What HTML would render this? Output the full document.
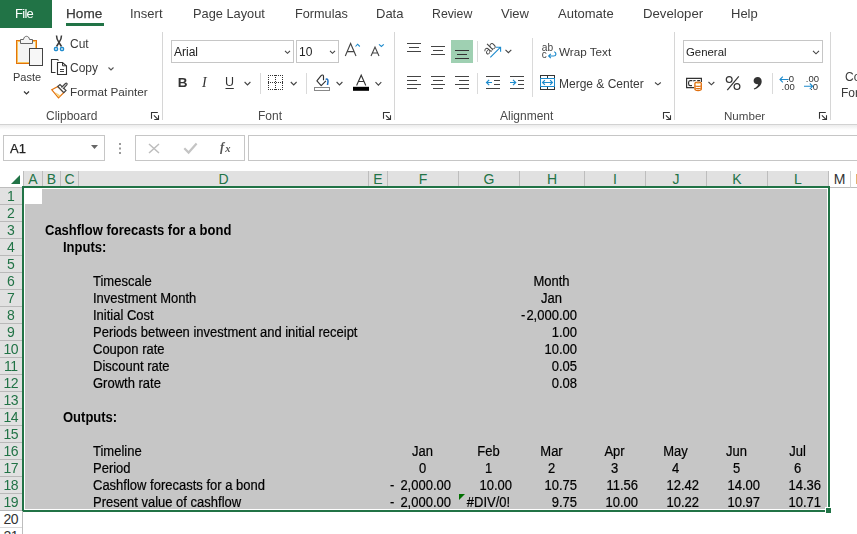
<!DOCTYPE html>
<html><head><meta charset="utf-8">
<style>
*{box-sizing:border-box;margin:0;padding:0}
html,body{width:857px;height:534px;overflow:hidden;background:#fff;font-family:"Liberation Sans",sans-serif;position:relative}
.a{position:absolute}
.t{position:absolute;white-space:pre;line-height:13px;font-size:13px}
.tab{position:absolute;white-space:pre;line-height:13px;font-size:13px;color:#3c3c3c;top:7px;will-change:transform}
.ui{position:absolute;white-space:pre;line-height:12px;font-size:12px;color:#3a3a3a;will-change:transform}
.gl{position:absolute;white-space:pre;line-height:12px;font-size:12px;color:#4a4a4a;top:110px;will-change:transform}
.sep{position:absolute;width:1px;background:#d6d6d6}
.ch{position:absolute;top:171px;height:16px;background:#e1e1e1;border-right:1px solid #bdbdbd;color:#217346;font-size:14px;line-height:16px;text-align:center}
.rh{position:absolute;left:0;width:22px;height:17px;background:#e1e1e1;border-bottom:1px solid #b9b9b9;color:#217346;font-size:14px;line-height:17px;text-align:center;letter-spacing:-0.6px;text-indent:-0.6px}
.c{position:absolute;white-space:pre;line-height:13px;font-size:13px;color:#000;transform:scaleY(1.08);transform-origin:0 11px;-webkit-text-stroke:0.2px #000}
.b{font-weight:bold}
.c.b{-webkit-text-stroke:0}
</style></head><body>

<!-- Tabs -->
<div class="a" style="left:0;top:0;width:52px;height:28px;background:#217346"></div>
<div class="tab" style="left:14.5px;color:#fff;font-size:13px;top:7px;letter-spacing:-0.7px">File</div>
<div class="tab" style="left:66px;color:#3a3a3a;font-size:13.6px;-webkit-text-stroke:0.25px #3a3a3a">Home</div>
<div class="a" style="left:66px;top:23px;width:38px;height:3px;background:#217346"></div>
<div class="tab" style="left:130px">Insert</div>
<div class="tab" style="left:193px;font-size:12.8px">Page Layout</div>
<div class="tab" style="left:294.5px;font-size:12.7px;top:8px">Formulas</div>
<div class="tab" style="left:376px">Data</div>
<div class="tab" style="left:432px;font-size:12.3px;top:8px">Review</div>
<div class="tab" style="left:500.5px">View</div>
<div class="tab" style="left:557.5px">Automate</div>
<div class="tab" style="left:643px;font-size:13.2px">Developer</div>
<div class="tab" style="left:731px">Help</div>

<!-- Ribbon bottom -->
<div class="a" style="left:0;top:124px;width:857px;height:1px;background:#d2d2d2"></div>
<div class="a" style="left:0;top:125px;width:857px;height:5px;background:linear-gradient(#ececec,#fff)"></div>

<!-- group separators -->
<div class="sep" style="left:162px;top:32px;height:88px"></div>
<div class="sep" style="left:394px;top:32px;height:88px"></div>
<div class="sep" style="left:674px;top:32px;height:88px"></div>
<div class="sep" style="left:830px;top:32px;height:88px"></div>

<!-- group labels -->
<div class="gl" style="left:46px">Clipboard</div>
<div class="gl" style="left:258px">Font</div>
<div class="gl" style="left:500px">Alignment</div>
<div class="gl" style="left:724px;font-size:11.6px">Number</div>


<!-- ribbon svg -->
<svg class="a" style="left:0;top:0" width="857" height="190" viewBox="0 0 857 190">
 <g fill="none" stroke-linecap="butt">
  <!-- paste -->
  <rect x="16.5" y="40.5" width="20" height="23" fill="#f4f4f4" stroke="#e3730d"/>
  <rect x="17.5" y="41.5" width="18" height="21" stroke="#f6c65e"/>
  <path d="M20.5 43.5V39.5H23.5C23.8 37.3 25 36.3 26.5 36.3C28 36.3 29.2 37.3 29.5 39.5H32.5V43.5Z" fill="#f4f4f4" stroke="#666"/>
  <rect x="29.5" y="48.5" width="13" height="17" fill="#f7f7f7" stroke="#444"/>
  <path d="M24 91.5l2.5 2.5l2.5-2.5" stroke="#333" stroke-width="1.2"/>
  <!-- cut -->
  <path d="M56.5 35.5C56.5 38 57 40 59 42.5L61.5 46.5M61.5 35.5C61.5 38 61 40 59 42.5L56.5 46.5" stroke="#3a3a3a" stroke-width="1.5"/>
  <rect x="54.5" y="47.5" width="3" height="3" rx="1" stroke="#1e8bcd" stroke-width="1.4"/>
  <rect x="60.5" y="47.5" width="3" height="3" rx="1" stroke="#1e8bcd" stroke-width="1.4"/>
  <!-- copy -->
  <path d="M55.5 72.5H51.5V59.5H57.5L58.5 60.5" stroke="#333" stroke-width="1.1"/>
  <path d="M57.5 62.5H62.5L66.5 66V74.5H57.5Z" fill="#fff" stroke="#333" stroke-width="1.1"/>
  <path d="M62.5 62.5V65.8H66.5" stroke="#333"/>
  <path d="M60 69.5H64M60 71.5H64" stroke="#444"/>
  <path d="M108.5 67.5l2.5 2.5l2.5-2.5" stroke="#555" stroke-width="1.1"/>
  <!-- format painter -->
  <path d="M51.8 89.8L57.8 86.5L63.8 92.6L58.5 97.8Z" fill="#fff" stroke="#e3730d" stroke-width="1.3"/>
  <path d="M55 92L60.5 95.5L58.5 97.2Z" fill="#f8d27a"/>
  <path d="M57.8 86.5L60 84.5L66 90.5L63.8 92.6Z" fill="#fff" stroke="#444" stroke-width="1.2"/>
  <path d="M61.5 87.5L65.5 83.5C66.5 82.5 67.8 83.8 66.8 84.8L63 88.8" fill="#fff" stroke="#444" stroke-width="1.2"/>
  <!-- launchers -->
  <path d="M151.5 118.8V112.5H157.8M153.9 115.4L158.2 119.7M154.3 119.5H158.5V115.2" stroke="#333" stroke-width="1.1"/>
  <path d="M383.5 118.8V112.5H389.8M385.9 115.4L390.2 119.7M386.3 119.5H390.5V115.2" stroke="#333" stroke-width="1.1"/>
  <path d="M663.5 118.8V112.5H669.8M665.9 115.4L670.2 119.7M666.3 119.5H670.5V115.2" stroke="#333" stroke-width="1.1"/>
  <path d="M819.5 118.8V112.5H825.8M821.9 115.4L826.2 119.7M822.3 119.5H826.5V115.2" stroke="#333" stroke-width="1.1"/>
  <!-- font box -->
  <rect x="171.5" y="40.5" width="122" height="22" fill="#fff" stroke="#c6c6c6"/>
  <path d="M285 50.8l2.5 2.5l2.5-2.5" stroke="#444" stroke-width="1.1"/>
  <rect x="296.5" y="40.5" width="42" height="22" fill="#fff" stroke="#c6c6c6"/>
  <path d="M330 50.8l2.5 2.5l2.5-2.5" stroke="#444" stroke-width="1.1"/>
  <!-- grow/shrink -->
  <path d="M345.3 56L350.6 43.5L356 56M347.2 51.6H354" stroke="#444" stroke-width="1.1"/>
  <path d="M355.5 46.5L357.6 44.2L359.8 46.5" stroke="#1e8bcd" stroke-width="1.1"/>
  <path d="M371 56L375 47L379 56M372.4 53H377.6" stroke="#444" stroke-width="1.1"/>
  <path d="M379 44.3L381.4 46.5L383.8 44.3" stroke="#1e8bcd" stroke-width="1.1"/>
  <!-- B I U -->
  <path d="M225.5 88.5H233.8" stroke="#333"/>
  <path d="M244.6 82l2.9 2.9l2.9-2.9" stroke="#444" stroke-width="1.1"/>
  <path d="M260.5 73V94" stroke="#dadada"/>
  <!-- borders -->
  <path d="M268 75.5H283.5M268 89.5H283.5M268.5 75V90M282.5 75V90M268 82.5H283.5M275.5 75V90" stroke="#333" stroke-dasharray="1 1"/>
  <path d="M290.8 82l2.9 2.9l2.9-2.9" stroke="#444" stroke-width="1.1"/>
  <path d="M306.5 73V94" stroke="#dadada"/>
  <!-- fill -->
  <path d="M323.5 80.3V76.3C323.5 74.9 322 74.6 321.1 75.7L316.9 80.9L321.2 85.6L325.9 80.9" stroke="#333" stroke-width="1.15" stroke-linejoin="round"/>
  <path d="M325.8 79.6C326.6 78.4 328 79 328 81.2C328 82.6 327.6 83.6 327.5 85" stroke="#1e6fc0" stroke-width="1.5"/>
  <rect x="314.5" y="87.5" width="15" height="3" stroke="#888" fill="#fff"/>
  <path d="M336.6 82l2.9 2.9l2.9-2.9" stroke="#444" stroke-width="1.1"/>
  <!-- font color -->
  <path d="M356.6 85.5L361.2 75.2L365.8 85.5M358.3 81.5H364.1" stroke="#333" stroke-width="1.1"/>
  <rect x="353" y="86.8" width="16" height="4" fill="#000"/>
  <path d="M375.5 82.2l2.9 2.9l2.9-2.9" stroke="#444" stroke-width="1.1"/>
  <!-- alignment row 1 -->
  <path d="M407 43.5H421M409 47.5H419M407 51.5H421" stroke="#444"/>
  <path d="M431 46.5H445M433 50.5H443M431 54.5H445" stroke="#444"/>
  <rect x="451" y="40" width="22" height="23" fill="#9fd0b2"/>
  <path d="M455 50.5H469M457 54.5H467M455 58.5H469" stroke="#333"/>
  <path d="M477.5 41V62" stroke="#dadada"/>
  <!-- orientation -->
  <text x="0" y="0" transform="translate(487.6 55.6) rotate(-45)" font-family="Liberation Sans" font-size="12" fill="#444">ab</text>
  <path d="M490.3 57.4L500.3 47.4M496 47.2H500.6V51.8" stroke="#1e8bcd" stroke-width="1.1"/>
  <path d="M505.5 49.8l2.9 2.9l2.9-2.9" stroke="#444" stroke-width="1.1"/>
  <path d="M532.5 38V97" stroke="#dadada"/>
  <!-- wrap text icon -->
  <text x="541.8" y="50.9" font-family="Liberation Sans" font-size="10.2" fill="#444">ab</text>
  <text x="541.8" y="58.2" font-family="Liberation Sans" font-size="10" fill="#444">c</text>
  <path d="M554.2 51.8C556.6 52.6 556.6 56 553.6 56H548.9M550.8 53.9L548.7 56L550.8 58.1" stroke="#1e8bcd" stroke-width="1.2"/>
  <!-- alignment row 2 -->
  <path d="M407 76.5H421M407 80.5H417M407 84.5H421M407 88.5H417" stroke="#444"/>
  <path d="M431 76.5H445M433 80.5H443M431 84.5H445M433 88.5H443" stroke="#444"/>
  <path d="M455 76.5H469M459 80.5H469M455 84.5H469M459 88.5H469" stroke="#444"/>
  <path d="M477.5 73V94" stroke="#dadada"/>
  <path d="M486 76.5H500M494 80.5H500M494 84.5H500M486 88.5H500" stroke="#444"/>
  <path d="M486.5 82.5H492M489.2 79.8L486.5 82.5L489.2 85.2" stroke="#1e8bcd" stroke-width="1.2"/>
  <path d="M510 76.5H524M518 80.5H524M518 84.5H524M510 88.5H524" stroke="#444"/>
  <path d="M510 82.5H515.6M513 79.8L515.7 82.5L513 85.2" stroke="#1e8bcd" stroke-width="1.2"/>
  <!-- merge icon -->
  <rect x="540.5" y="75.5" width="14" height="14" stroke="#333"/>
  <path d="M547.5 75.5V78.5M547.5 86.5V89.5" stroke="#333"/>
  <rect x="540.5" y="78.5" width="14" height="8" fill="#fff" stroke="#1e8bcd"/>
  <path d="M542.6 82.5H552.4M544.9 80.2L542.6 82.5L544.9 84.8M550.1 80.2L552.4 82.5L550.1 84.8" stroke="#1e8bcd" stroke-width="1.2"/>
  <path d="M655 82.5l2.9 2.4l2.9-2.4" stroke="#444" stroke-width="1.1"/>
  <!-- number -->
  <rect x="683.5" y="40.5" width="139" height="22" fill="#fff" stroke="#c6c6c6"/>
  <path d="M813 50.8l3 3l3-3" stroke="#444" stroke-width="1.1"/>
  <path d="M694 87.7H686.6V78.4H701.4V82" stroke="#333" stroke-width="1.2"/>
  <path d="M692.3 80.6H690.2C689 80.6 688.6 81.4 688.6 82.5V83.8C688.6 85 689 85.7 690.2 85.7H692" stroke="#333" stroke-width="1.2"/>
  <path d="M693.2 81.2C693.8 80.5 694.6 80.4 695.6 80.6M697.2 80.6H700" stroke="#333" stroke-width="1.1"/>
  <path d="M694.9 83.6C694.9 82.6 696.3 82.1 698.1 82.1C699.9 82.1 701.3 82.6 701.3 83.6V89C701.3 90 699.9 90.5 698.1 90.5C696.3 90.5 694.9 90 694.9 89Z" fill="#fff" stroke="#e0700f" stroke-width="1.3"/>
  <path d="M695 85.8C695.6 86.6 700.6 86.6 701.2 85.8M695 88C695.6 88.8 700.6 88.8 701.2 88" stroke="#e0700f" stroke-width="1.1"/>
  <path d="M696.5 83.4H699.7" stroke="#f6c86a" stroke-width="0.9"/>
  <path d="M708.5 82l2.9 2.8l2.9-2.8" stroke="#444" stroke-width="1.1"/>
  <path d="M772.5 73V94" stroke="#dadada"/>
  <path d="M780 79.5H788.6M782.8 76.7L780 79.5L782.8 82.3" stroke="#1e8bcd" stroke-width="1.1"/>
  <path d="M804 86.3H812.6M809.8 83.5L812.6 86.3L809.8 89.1" stroke="#1e8bcd" stroke-width="1.1"/>
 </g>
 <g fill="none" stroke="#333" stroke-width="1.2"><circle cx="729.2" cy="79.6" r="2.9"/><circle cx="737" cy="86.6" r="2.9"/><path d="M738.8 76.3L727.3 90.2"/></g>
 <path d="M757.8 76.9C760 76.9 761.7 78.6 761.7 81.2C761.7 85 758.5 88 754.2 89.6L753.8 88.6C756.3 87.4 757.8 85.8 758.2 84.2C755.6 84.5 753.6 83 753.6 80.7C753.6 78.6 755.5 76.9 757.8 76.9Z" fill="#333"/>
 <text x="786.2" y="81.6" font-family="Liberation Sans" font-size="9.5" fill="#333">.0</text>
 <text x="781.5" y="89.8" font-family="Liberation Sans" font-size="9.5" fill="#333">.00</text>
 <text x="805.8" y="81.8" font-family="Liberation Sans" font-size="9.5" fill="#333">.00</text>
 <text x="810.2" y="89.8" font-family="Liberation Sans" font-size="9.5" fill="#333">.0</text>
 <text x="177.8" y="87" font-family="Liberation Sans" font-weight="bold" font-size="13.5" fill="#333">B</text>
 <text x="202" y="87" font-family="Liberation Serif" font-style="italic" font-size="14" fill="#333">I</text>
 <text x="225" y="86.4" font-family="Liberation Sans" font-size="12.5" fill="#333">U</text>
 <!-- formula bar icons -->
 <path d="M149 144L159 153M159 144L149 153" stroke="#bdbdbd" stroke-width="1.5" fill="none"/>
 <path d="M184.3 148.3L188.6 152.6L196.6 143.6" stroke="#c4c4c4" stroke-width="2.2" fill="none"/>
 <text x="220" y="151.2" font-family="Liberation Serif" font-style="italic" font-weight="bold" font-size="12.5" fill="#555">f</text>
 <text x="225.3" y="152" font-family="Liberation Serif" font-style="italic" font-weight="bold" font-size="10.5" fill="#555">x</text>
 <path d="M91 145H98L94.5 149Z" fill="#666"/>
 <path d="M11 184H20V175Z" fill="#217346"/>
 <rect x="119" y="143" width="2" height="2" fill="#9a9a9a"/>
 <rect x="119" y="147.5" width="2" height="2" fill="#9a9a9a"/>
 <rect x="119" y="152" width="2" height="2" fill="#9a9a9a"/>
</svg>
<!-- ribbon text -->
<div class="ui" style="left:13px;top:71px;font-size:11px">Paste</div>
<div class="ui" style="left:70px;top:38px">Cut</div>
<div class="ui" style="left:70px;top:62px">Copy</div>
<div class="ui" style="left:70px;top:86px;font-size:11.75px">Format Painter</div>
<div class="ui" style="left:174px;top:46px;color:#222">Arial</div>
<div class="ui" style="left:299px;top:46px;color:#222">10</div>
<div class="ui" style="left:559px;top:46px;font-size:11.7px">Wrap Text</div>
<div class="ui" style="left:559px;top:78px">Merge &amp; Center</div>
<div class="ui" style="left:686px;top:46px;font-size:11.4px;color:#222">General</div>
<div class="ui" style="left:845px;top:71px">Co</div>
<div class="ui" style="left:841px;top:87px">For</div>


<!-- Formula bar -->
<div class="a" style="left:3px;top:135px;width:102px;height:26px;border:1px solid #c6c6c6"></div>
<div class="t" style="left:10px;top:142px;color:#222;-webkit-text-stroke:0.25px #222">A1</div>
<div class="a" style="left:135px;top:135px;width:110px;height:26px;border:1px solid #c6c6c6"></div>
<div class="a" style="left:248px;top:135px;width:620px;height:26px;border:1px solid #c6c6c6"></div>

<!-- Column headers -->
<div class="a" style="left:23px;top:171px;width:1px;height:16px;background:#bdbdbd"></div>
<div class="ch" style="left:24px;width:19px">A</div>
<div class="ch" style="left:43px;width:18px">B</div>
<div class="ch" style="left:61px;width:18px">C</div>
<div class="ch" style="left:79px;width:290px">D</div>
<div class="ch" style="left:369px;width:19px">E</div>
<div class="ch" style="left:388px;width:71px">F</div>
<div class="ch" style="left:459px;width:61px">G</div>
<div class="ch" style="left:520px;width:65px">H</div>
<div class="ch" style="left:585px;width:61px">I</div>
<div class="ch" style="left:646px;width:61px">J</div>
<div class="ch" style="left:707px;width:61px">K</div>
<div class="ch" style="left:768px;width:61px">L</div>
<div class="ch" style="left:829px;width:22px;background:#fff;color:#333;border-bottom:1px solid #bdbdbd;height:17px;border-right:1px solid #d4d4d4">M</div>
<div class="ch" style="left:851px;width:20px;background:#fff;color:#333;border-bottom:1px solid #bdbdbd;height:17px">N</div>
<div class="a" style="left:0;top:187px;width:22px;height:1px;background:#bdbdbd"></div>

<!-- Sheet selection -->
<div class="a" style="left:22px;top:186px;width:808px;height:326px;background:#217346"></div>
<div class="a" style="left:24px;top:188px;width:804px;height:322px;background:#fff"></div>
<div class="a" style="left:25px;top:189px;width:802px;height:320px;background:#c6c6c6"></div>
<div class="a" style="left:24px;top:188px;width:18px;height:16px;background:#fff"></div>

<div id="rows"></div>
<div class="rh" style="top:188px">1</div>
<div class="rh" style="top:205px">2</div>
<div class="rh" style="top:222px">3</div>
<div class="rh" style="top:239px">4</div>
<div class="rh" style="top:256px">5</div>
<div class="rh" style="top:273px">6</div>
<div class="rh" style="top:290px">7</div>
<div class="rh" style="top:307px">8</div>
<div class="rh" style="top:324px">9</div>
<div class="rh" style="top:341px">10</div>
<div class="rh" style="top:358px">11</div>
<div class="rh" style="top:375px">12</div>
<div class="rh" style="top:392px">13</div>
<div class="rh" style="top:409px">14</div>
<div class="rh" style="top:426px">15</div>
<div class="rh" style="top:443px">16</div>
<div class="rh" style="top:460px">17</div>
<div class="rh" style="top:477px">18</div>
<div class="rh" style="top:494px">19</div>
<div class="rh" style="top:511px;background:#fff;color:#333;border-bottom:1px solid #dadada">20</div>
<div class="rh" style="top:528px;background:#fff;color:#333;border-bottom:1px solid #dadada">21</div>
<div class="a" style="left:22px;top:511px;width:1px;height:23px;background:#bdbdbd"></div>
<div class="c b" style="left:45px;top:224px">Cashflow forecasts for a bond</div>
<div class="c b" style="left:63px;top:241px">Inputs:</div>
<div class="c" style="left:93px;top:275px">Timescale</div>
<div class="c" style="left:93px;top:292px">Investment Month</div>
<div class="c" style="left:93px;top:309px">Initial Cost</div>
<div class="c" style="left:93px;top:326px">Periods between investment and initial receipt</div>
<div class="c" style="left:93px;top:343px">Coupon rate</div>
<div class="c" style="left:93px;top:360px">Discount rate</div>
<div class="c" style="left:93px;top:377px">Growth rate</div>
<div class="c" style="left:519px;width:65px;text-align:center;top:275px">Month</div>
<div class="c" style="left:519px;width:65px;text-align:center;top:292px">Jan</div>
<div class="c" style="left:519px;width:58px;text-align:right;top:309px"><span style="margin-right:1px">-</span>2,000.00</div>
<div class="c" style="left:519px;width:58px;text-align:right;top:326px">1.00</div>
<div class="c" style="left:519px;width:58px;text-align:right;top:343px">10.00</div>
<div class="c" style="left:519px;width:58px;text-align:right;top:360px">0.05</div>
<div class="c" style="left:519px;width:58px;text-align:right;top:377px">0.08</div>
<div class="c b" style="left:63px;top:411px">Outputs:</div>
<div class="c" style="left:93px;top:445px">Timeline</div>
<div class="c" style="left:93px;top:462px">Period</div>
<div class="c" style="left:93px;top:479px">Cashflow forecasts for a bond</div>
<div class="c" style="left:93px;top:496px">Present value of cashflow</div>
<div class="c" style="left:387px;width:71px;text-align:center;top:445px">Jan</div>
<div class="c" style="left:387px;width:71px;text-align:center;top:462px">0</div>
<div class="c" style="left:458px;width:61px;text-align:center;top:445px">Feb</div>
<div class="c" style="left:458px;width:61px;text-align:center;top:462px">1</div>
<div class="c" style="left:519px;width:65px;text-align:center;top:445px">Mar</div>
<div class="c" style="left:519px;width:65px;text-align:center;top:462px">2</div>
<div class="c" style="left:584px;width:61px;text-align:center;top:445px">Apr</div>
<div class="c" style="left:584px;width:61px;text-align:center;top:462px">3</div>
<div class="c" style="left:645px;width:61px;text-align:center;top:445px">May</div>
<div class="c" style="left:645px;width:61px;text-align:center;top:462px">4</div>
<div class="c" style="left:706px;width:61px;text-align:center;top:445px">Jun</div>
<div class="c" style="left:706px;width:61px;text-align:center;top:462px">5</div>
<div class="c" style="left:767px;width:61px;text-align:center;top:445px">Jul</div>
<div class="c" style="left:767px;width:61px;text-align:center;top:462px">6</div>
<div class="c" style="left:387px;width:64px;text-align:right;top:479px">2,000.00</div>
<div class="c" style="left:387px;width:64px;text-align:right;top:496px">2,000.00</div>
<div class="c" style="left:458px;width:54px;text-align:right;top:479px">10.00</div>
<div class="c" style="left:458px;width:61px;text-align:center;top:496px">#DIV/0!</div>
<div class="c" style="left:519px;width:58px;text-align:right;top:479px">10.75</div>
<div class="c" style="left:519px;width:58px;text-align:right;top:496px">9.75</div>
<div class="c" style="left:584px;width:54px;text-align:right;top:479px">11.56</div>
<div class="c" style="left:584px;width:54px;text-align:right;top:496px">10.00</div>
<div class="c" style="left:645px;width:54px;text-align:right;top:479px">12.42</div>
<div class="c" style="left:645px;width:54px;text-align:right;top:496px">10.22</div>
<div class="c" style="left:706px;width:54px;text-align:right;top:479px">14.00</div>
<div class="c" style="left:706px;width:54px;text-align:right;top:496px">10.97</div>
<div class="c" style="left:767px;width:54px;text-align:right;top:479px">14.36</div>
<div class="c" style="left:767px;width:54px;text-align:right;top:496px">10.71</div>
<div class="c" style="left:390px;top:479px">-</div>
<div class="c" style="left:390px;top:496px">-</div>
<svg class="a" style="left:459px;top:494px" width="6" height="6"><path d="M0 0H6L0 6Z" fill="#006f00"/></svg>
<div class="a" style="left:825px;top:507px;width:7px;height:7px;background:#fff"></div>
<div class="a" style="left:826px;top:508px;width:5px;height:5px;background:#217346"></div>
<!--rowsend-->
</body></html>
